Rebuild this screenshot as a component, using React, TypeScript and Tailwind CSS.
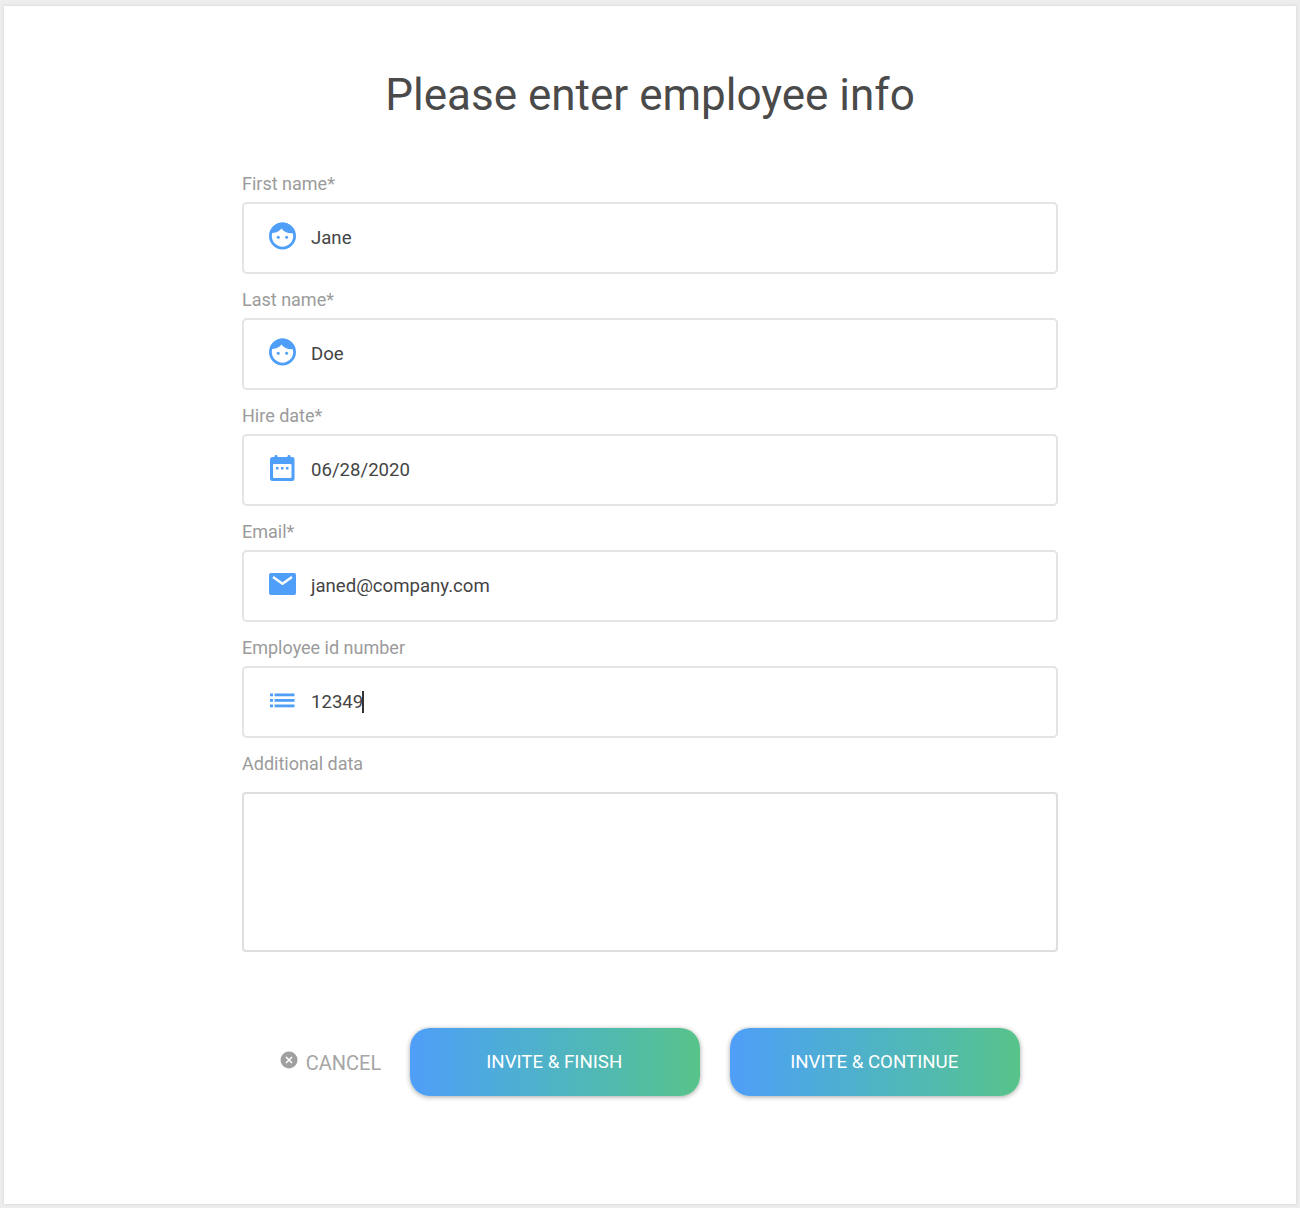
import { ReactNode } from 'react';

function FaceIcon() {
  return (
    <svg width="28" height="28" viewBox="0 0 28 28" fill="none" className="overflow-visible">
      <circle cx="14.5" cy="14" r="12.100" stroke="#4f9ef8" strokeWidth="2.800" fill="#fff" />
      <path d="M2 11C6 11.500 11 10 13.500 6.500C16 10.500 21 12 27 11C25.500 5 20.500 .5 14.500 .5C8.500 .5 3.500 5 2 11Z" fill="#4f9ef8" />
      <circle cx="10.200" cy="15.200" r="1.500" fill="#4f9ef8" />
      <circle cx="18.600" cy="15.200" r="1.500" fill="#4f9ef8" />
    </svg>
  );
}

function CalendarIcon() {
  return (
    <svg width="28" height="28" viewBox="0 0 28 28" fill="none">
      <rect x="6.500" y="1" width="3" height="5" rx="1.400" fill="#4f9ef8" />
      <rect x="19.500" y="1" width="3" height="5" rx="1.400" fill="#4f9ef8" />
      <rect x="2" y="3" width="24.500" height="24" rx="2.500" fill="#4f9ef8" />
      <rect x="5" y="10" width="18.500" height="14" rx="1" fill="#fff" />
      <rect x="8" y="13" width="2.500" height="2.500" fill="#4f9ef8" />
      <rect x="13" y="13" width="2.500" height="2.500" fill="#4f9ef8" />
      <rect x="18" y="13" width="2.500" height="2.500" fill="#4f9ef8" />
    </svg>
  );
}

function MailIcon() {
  return (
    <svg width="28" height="28" viewBox="0 0 28 28" fill="none" className="overflow-visible">
      <rect x="1" y="3" width="27" height="22" rx="2" fill="#4f9ef8" />
      <path d="M5 7L14.500 13.800L24 7" stroke="#fff" strokeWidth="2.400" />
    </svg>
  );
}

function ListIcon() {
  return (
    <svg width="28" height="28" viewBox="0 0 28 28" fill="#4f9ef8">
      <rect x="2" y="7.500" width="3" height="2.800" />
      <rect x="2" y="13" width="3" height="2.800" />
      <rect x="2" y="18.500" width="3" height="2.800" />
      <rect x="6.500" y="7.500" width="20" height="2.800" />
      <rect x="6.500" y="13" width="20" height="2.800" />
      <rect x="6.500" y="18.500" width="20" height="2.800" />
    </svg>
  );
}

function Field({ label, icon, value, caret }: { label: string; icon: ReactNode; value: string; caret?: boolean }) {
  return (
    <div className="mb-[14px]">
      <div className="h-[22px] mb-2 pt-[1px] text-[18px] leading-[22px] text-[#9b9b9b]">{label}</div>
      <div className="h-[72px] flex items-center pl-[24px] bg-white border-2 border-[#e4e4e4] rounded-[5px]">
        <span className="w-[28px] h-[28px] -mt-[4px]">{icon}</span>
        <span className="ml-[15px] mt-[2px] text-[18.600px] text-[#444444]">{value}</span>
        {caret && <span className="w-[2px] h-[22px] -ml-[1px] bg-[#333] -mt-[1px]" />}
      </div>
    </div>
  );
}

export default function App() {
  return (
    <div className="h-[1208px] bg-[#ededed] pt-[6px] px-[4px] font-['Roboto',sans-serif]">
      <div className="h-[1198px] bg-white pt-[60px] flex flex-col items-center shadow-[0_0_3px_rgba(0,0,0,0.12)]">
        <h1 className="h-[58px] text-[44px] leading-[58px] text-[#4a4a4a] mb-[48px]">Please enter employee info</h1>
        <div className="w-[816px]">
          <Field label="First name*" icon={<FaceIcon />} value="Jane" />
          <Field label="Last name*" icon={<FaceIcon />} value="Doe" />
          <Field label="Hire date*" icon={<CalendarIcon />} value="06/28/2020" />
          <Field label="Email*" icon={<MailIcon />} value="janed@company.com" />
          <Field label="Employee id number" icon={<ListIcon />} value="12349" caret />
          <div className="h-[22px] mb-[18px] pt-[1px] text-[18px] leading-[22px] text-[#9b9b9b]">Additional data</div>
          <div className="h-[160px] bg-white border-2 border-[#dedede] rounded-[4px]" />
        </div>
        <div className="mt-[76px] flex items-center">
          <button className="flex items-center mr-[29px] text-[20px] text-[#a6a6a6]">
            <svg width="18" height="18" viewBox="0 0 18 18" className="-mt-[4px] mr-[8px]">
              <circle cx="9" cy="9" r="8.500" fill="#a0a0a0" />
              <path d="M6 6l6 6M12 6l-6 6" stroke="#fff" strokeWidth="1.500" />
            </svg>
            <span className="mt-[2px]">CANCEL</span>
          </button>
          <button className="w-[290px] h-[68px] rounded-[20px] bg-gradient-to-r from-[#4f9ef8] to-[#58c389] text-white text-[18.700px] pr-[2px] shadow-[0_1px_5px_rgba(0,0,0,0.35)] mr-[30px]">
            INVITE &amp; FINISH
          </button>
          <button className="w-[290px] h-[68px] rounded-[20px] bg-gradient-to-r from-[#4f9ef8] to-[#58c389] text-white text-[18.700px] pr-[2px] shadow-[0_1px_5px_rgba(0,0,0,0.35)]">
            INVITE &amp; CONTINUE
          </button>
        </div>
      </div>
    </div>
  );
}
